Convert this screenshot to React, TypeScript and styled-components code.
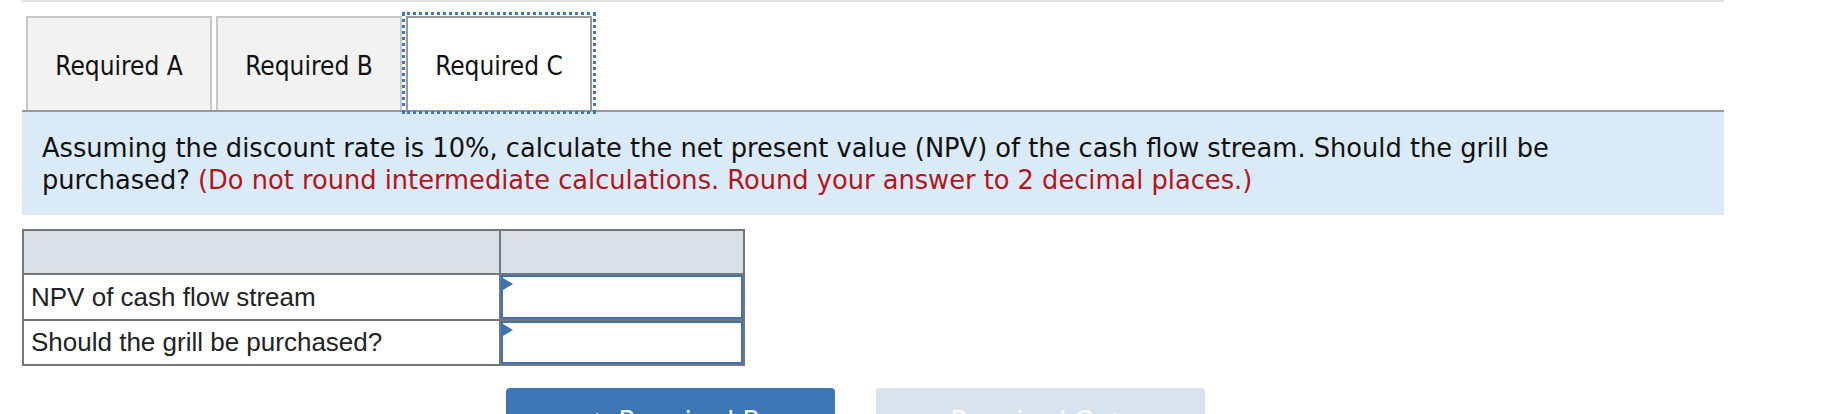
import React from "react";
import styled, { createGlobalStyle } from "styled-components";
import { ChevronLeft, ChevronRight } from "lucide-react";

const GlobalStyle = createGlobalStyle`
  html, body {
    margin: 0;
    padding: 0;
    background: #fff;
  }
  * {
    box-sizing: border-box;
  }
`;

const Page = styled.div`
  margin-left: 22px;
  width: 1702px;
  border-top: 2px solid #e2e2e2;
  padding-top: 14px;
`;

const TabStrip = styled.div`
  display: flex;
  gap: 4px;
  padding-left: 4px;
  border-bottom: 2px solid #999;
`;

const Tab = styled.button<{ $active?: boolean }>`
  width: 186px;
  height: 94px;
  margin: 0;
  padding: 3px 0 0;
  display: flex;
  align-items: center;
  justify-content: center;
  border: 2px solid ${(p) => (p.$active ? "#999" : "#c8c8c8")};
  border-bottom: none;
  background: ${(p) => (p.$active ? "#fff" : "#f2f2f2")};
  color: #111;
  font-family: "DejaVu Sans Condensed", "DejaVu Sans", sans-serif;
  font-stretch: condensed;
  font-size: 26px;
  outline: ${(p) => (p.$active ? "3px dotted #3b78c0" : "none")};
  outline-offset: 1px;
  cursor: pointer;
`;

const Prompt = styled.div`
  background: #dbeaf7;
  padding: 20px 20px 19px;
  font-family: "DejaVu Sans", Verdana, sans-serif;
  font-size: 25.7px;
  line-height: 32px;
  color: #111;
`;

const Hint = styled.span`
  color: #b3151d;
`;

const Grid = styled.div`
  margin-top: 14px;
  display: grid;
  grid-template-columns: 475px 242px;
  grid-template-rows: 42px 44px 43px;
  gap: 2px;
  padding: 2px;
  width: 723px;
  background: #777;
  font-family: "Liberation Sans", Arial, sans-serif;
  font-size: 26px;
  color: #222;
`;

const HeadCell = styled.div`
  background: #d9dee7;
`;

const LabelCell = styled.div`
  background: #fff;
  display: flex;
  align-items: center;
  padding-left: 7px;
`;

const InputCell = styled.div`
  position: relative;
  background: #fff;
`;

const AnswerInput = styled.input`
  width: 100%;
  height: 100%;
  margin: 0;
  border: 2px solid #3b73b5;
  background: #fff;
  font: inherit;
  padding: 0 8px;
  outline: none;
`;

const Marker = styled.span`
  position: absolute;
  left: 2px;
  top: 3px;
  width: 0;
  height: 0;
  border-top: 6px solid transparent;
  border-bottom: 6px solid transparent;
  border-left: 10px solid #3b73b5;
  pointer-events: none;
`;

const NavRow = styled.div`
  display: flex;
  gap: 41px;
  margin-top: 22px;
  padding-left: 484px;
`;

const NavButton = styled.button<{ $disabled?: boolean }>`
  width: 329px;
  height: 64px;
  border: none;
  border-radius: 4px;
  padding: 18px 0 0;
  display: flex;
  align-items: flex-start;
  justify-content: center;
  gap: 12px;
  background: ${(p) => (p.$disabled ? "#d8e3f0" : "#3c76b5")};
  color: #fff;
  font-family: "DejaVu Sans", Verdana, sans-serif;
  font-size: 26px;
  line-height: 30px;
  cursor: ${(p) => (p.$disabled ? "default" : "pointer")};

  svg {
    margin-top: 2px;
  }
`;

const rows = ["NPV of cash flow stream", "Should the grill be purchased?"];

export default function App() {
  return (
    <>
      <GlobalStyle />
      <Page>
        <TabStrip>
          <Tab>Required A</Tab>
          <Tab>Required B</Tab>
          <Tab $active>Required C</Tab>
        </TabStrip>

        <Prompt>
          Assuming the discount rate is 10%, calculate the net present value (NPV) of the cash flow
          stream. Should the grill be purchased?{" "}
          <Hint>(Do not round intermediate calculations. Round your answer to 2 decimal places.)</Hint>
        </Prompt>

        <Grid>
          <HeadCell />
          <HeadCell />
          {rows.map((label) => (
            <React.Fragment key={label}>
              <LabelCell>{label}</LabelCell>
              <InputCell>
                <AnswerInput aria-label={label} />
                <Marker />
              </InputCell>
            </React.Fragment>
          ))}
        </Grid>

        <NavRow>
          <NavButton>
            <ChevronLeft size={26} strokeWidth={2.5} />
            Required B
          </NavButton>
          <NavButton $disabled disabled>
            Required C
            <ChevronRight size={26} strokeWidth={2.5} />
          </NavButton>
        </NavRow>
      </Page>
    </>
  );
}
